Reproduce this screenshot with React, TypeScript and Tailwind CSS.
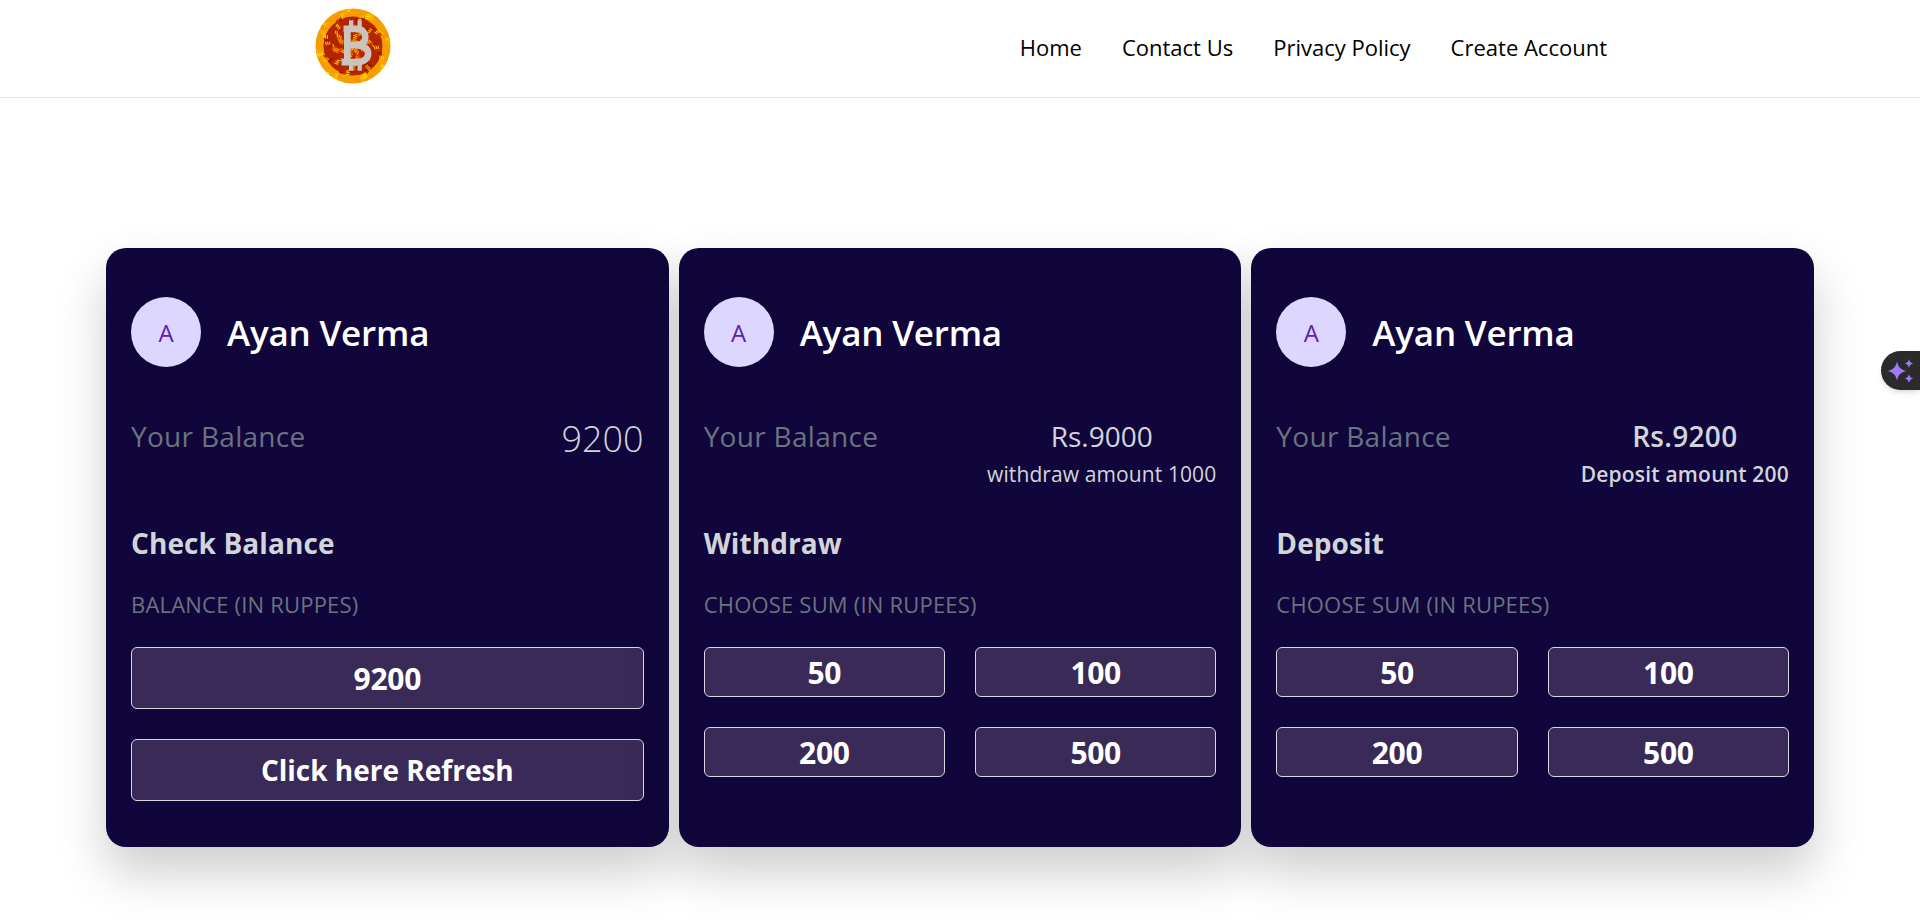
import React from "react";

const font = "font-['Open_Sans','Noto_Sans',sans-serif]";

// deterministic flecks for the coin texture
const flecks = Array.from({ length: 340 }, (_, i) => {
  const angle = i * 2.399;
  const r = 3 + ((i * 37) % 36);
  const x = 40 + r * Math.cos(angle);
  const y = 40 + r * Math.sin(angle);
  const tilt = angle + 1.2;
  const outer = ["#ffe600", "#ffc400", "#ff8a00", "#f5d000", "#ffa800"];
  const inner = ["#ffd000", "#d92a00", "#8f1200", "#f5b000", "#a51b00"];
  const middle = ["#ff9a00", "#e85a00", "#ffc400", "#d92a00", "#f07a00"];
  return {
    x1: x,
    y1: y,
    x2: x + 3 * Math.cos(tilt),
    y2: y + 3 * Math.sin(tilt),
    c: r > 31 ? outer[i % 5] : r > 20 ? inner[i % 5] : middle[i % 5],
  };
});

const CoinLogo = () => (
  <svg viewBox="0 0 80 80" className="w-[76px] h-[76px] mt-[-5px]">
    <circle cx="40" cy="40" r="39.5" fill="#f79d00" />
    <circle cx="40" cy="40" r="31" fill="#b32400" />
    {flecks.map((f, i) => (
      <line key={i} x1={f.x1} y1={f.y1} x2={f.x2} y2={f.y2} stroke={f.c} strokeWidth="1.2" strokeLinecap="round" />
    ))}
    <g fill="none" stroke="#c9c4bd" strokeWidth="7">
      <path d="M30 22 H44 C56 22 56 39 44 39 H33 M44 39 C60 39 60 57 44 57 H28 M34 22 V57" />
      <path d="M38 13 V22 M47 13 V22 M38 57 V66 M47 57 V66" strokeWidth="4.5" />
    </g>
  </svg>
);

const NavBar = () => (
  <header className="h-[98px] border-b border-[#e8e8e8] bg-white flex items-center pl-[315px] pr-[313px] justify-between">
    <CoinLogo />
    <nav className="flex items-center gap-[40px] text-[22px] text-black mt-[-2px]">
      <a>Home</a>
      <a>Contact Us</a>
      <a>Privacy Policy</a>
      <a>Create Account</a>
    </nav>
  </header>
);

const AmountButton = ({ label, tall, wordy }: { label: string; tall?: boolean; wordy?: boolean }) => (
  <button
    className={`w-full rounded-md border border-[#d9d6e4] bg-[#392a58] text-white font-bold flex items-center justify-center ${
      wordy ? "text-[28px]" : "text-[30px] tracking-[-0.3px]"
    } ${tall ? "h-[62px]" : "h-[50px]"}`}
  >
    {label}
  </button>
);

const Card = ({
  balance,
  note,
  noteBold,
  title,
  caption,
  children,
}: {
  balance: React.ReactNode;
  note?: React.ReactNode;
  noteBold?: boolean;
  title: string;
  caption: string;
  children: React.ReactNode;
}) => (
  <div className="h-[599px] rounded-[20px] bg-[#11063b] shadow-[0_25px_50px_rgba(0,0,0,0.2)] px-[25px] pt-[49px]">
    <div className="flex items-center h-[70px]">
      <div className="w-[70px] h-[70px] rounded-full bg-[#ddd6fe] text-[#5b21b6] text-[24px] font-medium pt-[2px] flex items-center justify-center">
        A
      </div>
      <h2 className="ml-[26px] mt-[2px] text-[35px] font-semibold text-white tracking-[-0.2px]">Ayan Verma</h2>
    </div>
    <div className="flex justify-between h-[105px] mt-[51px]">
      <span className="text-[28px] leading-[36px] text-[#6b7280] font-medium tracking-[0.3px]">Your Balance</span>
      <div className="flex flex-col items-center text-[#d1d5db]">
        {balance}
        {note && (
          <span className={`text-[21px] leading-[30px] mt-[5px] ${noteBold ? "font-semibold tracking-[0.2px]" : "tracking-[0.1px]"}`}>
            {note}
          </span>
        )}
      </div>
    </div>
    <h3 className="text-[28px] leading-[40px] font-bold text-[#d1d5db] tracking-[0.1px]">{title}</h3>
    <p className="mt-[27px] text-[22px] leading-[28px] text-[#6b7280] tracking-[0.2px]">{caption}</p>
    {children}
  </div>
);

const SumGrid = () => (
  <div className="grid grid-cols-2 gap-x-[30px] gap-y-[30px] mt-[29px]">
    {["50", "100", "200", "500"].map((v) => (
      <AmountButton key={v} label={v} />
    ))}
  </div>
);

const AssistantBadge = () => (
  <div className="absolute right-0 top-[351px] w-[39px] h-[39px] rounded-l-full bg-[#2b2b2b] shadow-md flex items-center pl-[4px]">
    <svg viewBox="0 0 32 32" className="w-[32px] h-[32px]" fill="#a178f5">
      <path d="M12 6.5 C13.6 12.5 15.5 14.4 21.5 16 C15.5 17.6 13.6 19.5 12 25.5 C10.4 19.5 8.5 17.6 2.5 16 C8.5 14.4 10.4 12.5 12 6.5 Z" />
      <path d="M24 4 C24.8 7 25.6 7.8 28.5 8.5 C25.6 9.2 24.8 10 24 13 C23.2 10 22.4 9.2 19.5 8.5 C22.4 7.8 23.2 7 24 4 Z" />
      <path d="M24 19 C24.8 22 25.6 22.8 28.5 23.5 C25.6 24.2 24.8 25 24 28 C23.2 25 22.4 24.2 19.5 23.5 C22.4 22.8 23.2 22 24 19 Z" />
    </svg>
  </div>
);

export default function App() {
  return (
    <div className={`${font} min-h-[920px] bg-white overflow-hidden relative`}>
      <NavBar />
      <main className="grid grid-cols-3 gap-x-[10px] px-[106px] pt-[150px]">
        <Card
          title="Check Balance"
          caption="BALANCE (IN RUPPES)"
          balance={<span className="self-end text-[36px] leading-[42px] font-light">9200</span>}
        >
          <div className="flex flex-col gap-[30px] mt-[29px]">
            <AmountButton label="9200" tall />
            <AmountButton label="Click here Refresh" tall wordy />
          </div>
        </Card>
        <Card
          title="Withdraw"
          caption="CHOOSE SUM (IN RUPEES)"
          balance={<span className="text-[28px] leading-[36px]">Rs.9000</span>}
          note="withdraw amount 1000"
        >
          <SumGrid />
        </Card>
        <Card
          title="Deposit"
          caption="CHOOSE SUM (IN RUPEES)"
          balance={<span className="text-[28px] leading-[36px] font-semibold tracking-[0.3px]">Rs.9200</span>}
          note="Deposit amount 200"
          noteBold
        >
          <SumGrid />
        </Card>
      </main>
      <AssistantBadge />
    </div>
  );
}
